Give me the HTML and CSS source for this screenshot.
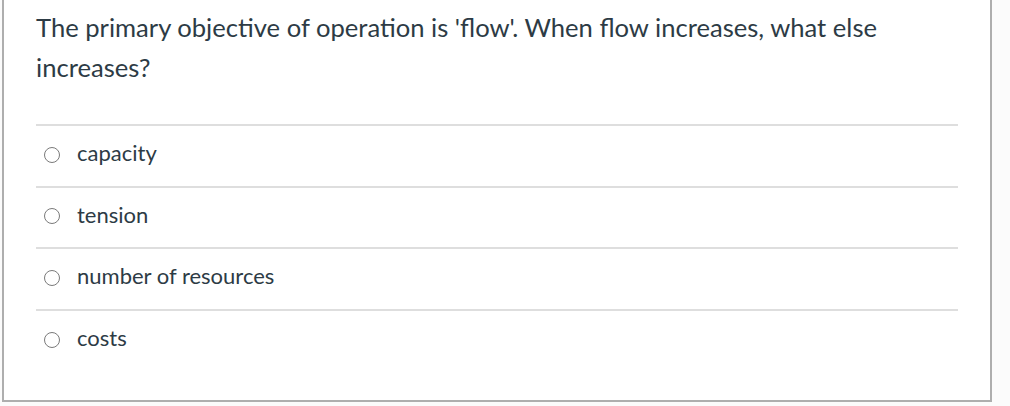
FILE: index.html
```html
<!DOCTYPE html>
<html>
<head>
<meta charset="utf-8">
<link rel="stylesheet" href="styles.css">
</head>
<body>
<div class="question">
  <div class="question-text">The primary objective of operation is 'flow'. When flow increases, what else increases?</div>
  <div class="answers">
    <label class="answer"><span class="radio"></span><span class="answer-text">capacity</span></label>
    <label class="answer"><span class="radio"></span><span class="answer-text">tension</span></label>
    <label class="answer"><span class="radio"></span><span class="answer-text">number of resources</span></label>
    <label class="answer"><span class="radio"></span><span class="answer-text">costs</span></label>
  </div>
</div>
</body>
</html>
```
FILE: styles.css
```css
html, body {
  margin: 0;
  padding: 0;
  background: #fbfbfb;
}
body {
  font-family: Lato, "Liberation Sans", sans-serif;
  color: #2d3b45;
}
.question {
  margin-left: 2px;
  width: 990px;
  height: 402px;
  background: #fff;
  border-left: 2px solid #aeaeae;
  border-right: 2px solid #aeaeae;
  border-bottom: 2px solid #aeaeae;
  padding: 0 32px;
  box-sizing: border-box;
}
.question-text {
  font-size: 25.6px;
  line-height: 40px;
  padding-top: 7px;
  height: 124px;
  box-sizing: border-box;
}
.answer {
  display: flex;
  align-items: center;
  gap: 17px;
  height: 61.6px;
  border-top: 2px solid #dedede;
  padding-left: 8px;
  padding-bottom: 2px;
  font-size: 22px;
  box-sizing: border-box;
}
.answer-text {
  padding-bottom: 4px;
}
.radio {
  flex: none;
  width: 16px;
  height: 16px;
  border: 1.5px solid #7a7a7a;
  border-radius: 50%;
  box-sizing: border-box;
}
```
